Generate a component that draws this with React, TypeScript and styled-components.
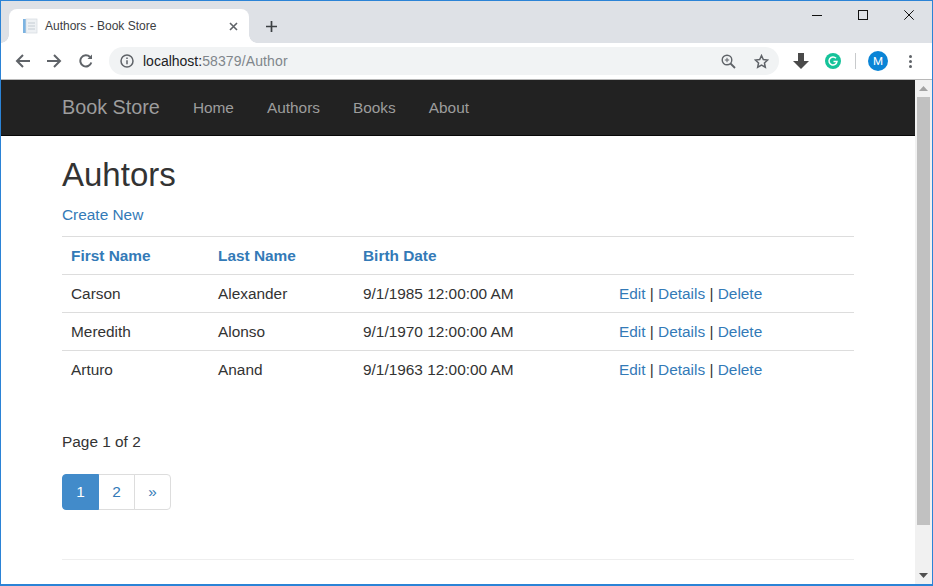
import React from "react";
import styled, { createGlobalStyle } from "styled-components";

const Global = createGlobalStyle`
  html, body { margin: 0; padding: 0; background: #fff; }
  body { font-family: "Liberation Sans", Arial, sans-serif; overflow: hidden; }
  * { box-sizing: border-box; }
`;

const Win = styled.div`
  width: 933px; height: 586px; border: 1px solid #2b83d6; border-bottom-width: 2px;
  display: flex; flex-direction: column; overflow: hidden; background: #fff;
`;
const TabStrip = styled.div`
  height: 42px; background: #dee1e6; display: flex; align-items: flex-end; flex: none; padding-left: 8px;
`;
const Tab = styled.div`
  position: relative;
  width: 240px; height: 34px; background: #fff; border-radius: 8px 8px 0 0;
  display: flex; align-items: center; padding: 0 11px 0 13px; font-size: 12px; color: #3c4043;
  &::before, &::after { content: ""; position: absolute; bottom: 0; width: 8px; height: 8px; }
  &::before { left: -8px; background: radial-gradient(circle at 0 0, #dee1e6 7.5px, #fff 8px); }
  &::after { right: -8px; background: radial-gradient(circle at 100% 0, #dee1e6 7.5px, #fff 8px); }
`;
const TabTitle = styled.span` flex: 1; margin-left: 7px; white-space: nowrap; `;
const NewTab = styled.div` width: 14px; height: 34px; margin-left: 16px; display: flex; align-items: center; `;
const WinControls = styled.div`
  margin-left: auto; align-self: flex-start; display: flex; align-items: center; height: 28px; padding-right: 18px; gap: 36px;
`;
const Toolbar = styled.div`
  height: 37px; flex: none; background: #fff; border-bottom: 1px solid #b8b8b8; display: flex; align-items: center; padding-left: 14px;
`;
const NavIcons = styled.div` display: flex; align-items: center; gap: 17px; width: 94px; `;
const Omni = styled.div`
  width: 670px; height: 28px; border-radius: 14px; background: #f1f3f4; display: flex; align-items: center; padding: 0 10px 0 11px; font-size: 14px;
`;
const Host = styled.span` margin-left: 9px; color: #202124; `;
const Rest = styled.span` color: #80868b; letter-spacing: 0.12px; `;
const OmniEnd = styled.div` margin-left: auto; display: flex; align-items: center; gap: 18px; `;
const Exts = styled.div` display: flex; align-items: center; margin-left: 14px; width: 130px; `;
const Divider = styled.div` width: 1px; height: 16px; background: #c8cacc; margin: 0 12px 0 14px; `;
const Avatar = styled.div`
  width: 20px; height: 20px; border-radius: 50%; background: #0a84d6; color: #fff; font-size: 11.5px;
  display: flex; align-items: center; justify-content: center; font-family: "Roboto", sans-serif;
`;
const Kebab = styled.div` margin-left: 21px; display: flex; flex-direction: column; gap: 2px; `;
const Dot = styled.i` width: 3px; height: 3px; border-radius: 50%; background: #5f6368; display: block; `;

const Content = styled.div` flex: 1; display: flex; min-height: 0; `;
const Page = styled.div` flex: 1; min-width: 0; overflow: hidden; color: #333; font-size: 15.4px; `;
const Navbar = styled.div`
  height: 56px; background: #222; border-bottom: 1px solid #080808; padding-left: 61px; display: flex; align-items: center;
`;
const Brand = styled.a` font-size: 19.8px; color: #9d9d9d; margin-right: 33px; `;
const NavLink = styled.a` font-size: 15.4px; color: #9d9d9d; margin-right: 33px; `;
const Body = styled.div` padding: 0 61px; `;
const Title = styled.h2` font-size: 33px; font-weight: 500; line-height: 36px; margin: 21px 0 0; color: #333; `;
const Link = styled.a` color: #337ab7; `;
const CreateP = styled.p` margin: 11px 0 0; line-height: 22px; height: 22px; `;
const Table = styled.table`
  width: 792px; border-collapse: collapse; margin-top: 10px; table-layout: fixed;
`;
const Th = styled.th<{ $w?: number }>`
  ${p => p.$w ? `width: ${p.$w}px;` : ""}
  text-align: left; padding: 0 0 0 9px; height: 38px; border-top: 1px solid #ddd; border-bottom: 1px solid #ddd; font-weight: 700; color: #337ab7;
`;
const Td = styled.td` padding: 0 0 0 9px; height: 38px; border-top: 1px solid #ddd; `;
const PageInfo = styled.p` margin: 42px 0 0; line-height: 22px; `;
const Pager = styled.div` display: inline-flex; margin-top: 21px; height: 36px; `;
const PageBtn = styled.a<{ $active?: boolean; $w: number; $pos?: "first" | "last" }>`
  position: relative; z-index: ${p => p.$active ? 1 : 0};
  width: ${p => p.$w}px; height: 36px; display: flex; align-items: center; justify-content: center;
  border: 1px solid ${p => p.$active ? "#428bca" : "#ddd"};
  background: ${p => p.$active ? "#428bca" : "#fff"};
  color: ${p => p.$active ? "#fff" : "#337ab7"};
  margin-left: ${p => p.$pos === "first" ? 0 : -1}px;
  border-radius: ${p => p.$pos === "first" ? "4px 0 0 4px" : p.$pos === "last" ? "0 4px 4px 0" : "0"};
`;
const Rule = styled.hr` margin: 49px 0 0; width: 792px; border: 0; border-top: 1px solid #eee; `;

const Scrollbar = styled.div`
  width: 17px; flex: none; background: #f1f1f1; display: flex; flex-direction: column; align-items: center;
`;
const ScrollBtn = styled.div` height: 17px; flex: none; display: flex; align-items: center; justify-content: center; `;
const Thumb = styled.div` width: 13px; height: 428px; background: #c1c1c1; flex: none; `;
const Spacer = styled.div` flex: 1; `;

const ic = { fill: "none", stroke: "#5f6368", strokeWidth: 2 } as const;

const rows = [
  ["Carson", "Alexander", "9/1/1985 12:00:00 AM"],
  ["Meredith", "Alonso", "9/1/1970 12:00:00 AM"],
  ["Arturo", "Anand", "9/1/1963 12:00:00 AM"],
];

export default function App() {
  return (
    <Win>
      <Global />
      <TabStrip>
        <Tab>
          <svg width="16" height="16" viewBox="0 0 16 16">
            <rect x="1" y="1" width="3" height="14" fill="#7db4e2" />
            <rect x="4" y="1" width="11" height="14" fill="#eef1f4" stroke="#d5dbe0" strokeWidth="0.7" />
            <path d="M6 5h7M6 8h7M6 11h7" stroke="#c4ccd3" />
          </svg>
          <TabTitle>Authors - Book Store</TabTitle>
          <svg width="9" height="9" viewBox="0 0 9 9"><path d="M1 1l7 7M8 1l-7 7" stroke="#5f6368" strokeWidth="1.6" /></svg>
        </Tab>
        <NewTab>
          <svg width="13" height="13" viewBox="0 0 13 13"><path d="M6.500 1v11M1 6.500h11" stroke="#3c4043" strokeWidth="1.7" /></svg>
        </NewTab>
        <WinControls>
          <svg width="10" height="10" viewBox="0 0 10 10"><path d="M0 5.500h10" stroke="#111" /></svg>
          <svg width="10" height="10" viewBox="0 0 10 10"><rect x=".5" y=".5" width="9" height="9" fill="none" stroke="#111" /></svg>
          <svg width="10" height="10" viewBox="0 0 10 10"><path d="M.3.300l9.400 9.400M9.700.300L.3 9.700" stroke="#111" /></svg>
        </WinControls>
      </TabStrip>
      <Toolbar>
        <NavIcons>
          <svg width="15" height="14" viewBox="0 0 15 14" {...ic}><path d="M15 7H2M8 1L2 7l6 6" /></svg>
          <svg width="15" height="14" viewBox="0 0 15 14" {...ic}><path d="M0 7h13M7 1l6 6-6 6" /></svg>
          <svg width="14" height="14" viewBox="0 0 14 14" {...ic}><path d="M12.300 8.500A5.600 5.600 0 1 1 11 3" /><path d="M13 0.500V5H8.500" fill="#5f6368" stroke="none" /></svg>
        </NavIcons>
        <Omni>
          <svg width="14" height="14" viewBox="0 0 14 14"><circle cx="7" cy="7" r="6" fill="none" stroke="#5f6368" strokeWidth="1.5" /><path d="M7 6.200v4M7 3.500v1.500" stroke="#5f6368" strokeWidth="1.500" /></svg>
          <Host>localhost:</Host><Rest>58379/Author</Rest>
          <OmniEnd>
            <svg width="15" height="15" viewBox="0 0 15 15" fill="none" stroke="#5f6368" strokeWidth="1.400"><circle cx="6" cy="6" r="4.800" /><path d="M9.500 9.500l4.500 4.500" strokeWidth="1.800" /><path d="M6 3.800v4.400M3.800 6h4.400" strokeWidth="1" /></svg>
            <svg width="15" height="15" viewBox="0 0 24 24" fill="none" stroke="#5f6368" strokeWidth="2.400"><path d="M12 2.500l2.900 6.300 6.900.8-5.100 4.700 1.400 6.800L12 17.600l-6.100 3.500 1.400-6.800-5.100-4.700 6.900-.8z" /></svg>
          </OmniEnd>
        </Omni>
        <Exts>
          <svg width="16" height="17" viewBox="0 0 16 17"><path d="M5 0h6v8h5l-8 8-8-8h5z" fill="#4a4a4a" /></svg>
          <svg style={{ marginLeft: 16 }} width="16" height="16" viewBox="0 0 16 16"><circle cx="8" cy="8" r="8" fill="#15c39a" /><path d="M11 5.300A4 4 0 1 0 12 8.500H8.500" fill="none" stroke="#fff" strokeWidth="1.500" /></svg>
          <Divider />
          <Avatar>M</Avatar>
          <Kebab><Dot /><Dot /><Dot /></Kebab>
        </Exts>
      </Toolbar>
      <Content>
        <Page>
          <Navbar>
            <Brand>Book Store</Brand>
            <NavLink>Home</NavLink>
            <NavLink>Authors</NavLink>
            <NavLink>Books</NavLink>
            <NavLink>About</NavLink>
          </Navbar>
          <Body>
            <Title>Auhtors</Title>
            <CreateP><Link>Create New</Link></CreateP>
            <Table>
              <thead>
                <tr>
                  <Th $w={147}>First Name</Th>
                  <Th $w={145}>Last Name</Th>
                  <Th $w={256}>Birth Date</Th>
                  <Th />
                </tr>
              </thead>
              <tbody>
                {rows.map(r => (
                  <tr key={r[0]}>
                    <Td>{r[0]}</Td>
                    <Td>{r[1]}</Td>
                    <Td>{r[2]}</Td>
                    <Td><Link>Edit</Link> | <Link>Details</Link> | <Link>Delete</Link></Td>
                  </tr>
                ))}
              </tbody>
            </Table>
            <PageInfo>Page 1 of 2</PageInfo>
            <Pager>
              <PageBtn $active $w={37} $pos="first">1</PageBtn>
              <PageBtn $w={37}>2</PageBtn>
              <PageBtn $w={37} $pos="last">»</PageBtn>
            </Pager>
            <Rule />
          </Body>
        </Page>
        <Scrollbar>
          <ScrollBtn><svg width="9" height="5" viewBox="0 0 9 5"><path d="M4.500 0L9 5H0z" fill="#a3a3a3" /></svg></ScrollBtn>
          <Thumb />
          <Spacer />
          <ScrollBtn><svg width="9" height="5" viewBox="0 0 9 5"><path d="M0 0h9L4.500 5z" fill="#505050" /></svg></ScrollBtn>
        </Scrollbar>
      </Content>
    </Win>
  );
}
